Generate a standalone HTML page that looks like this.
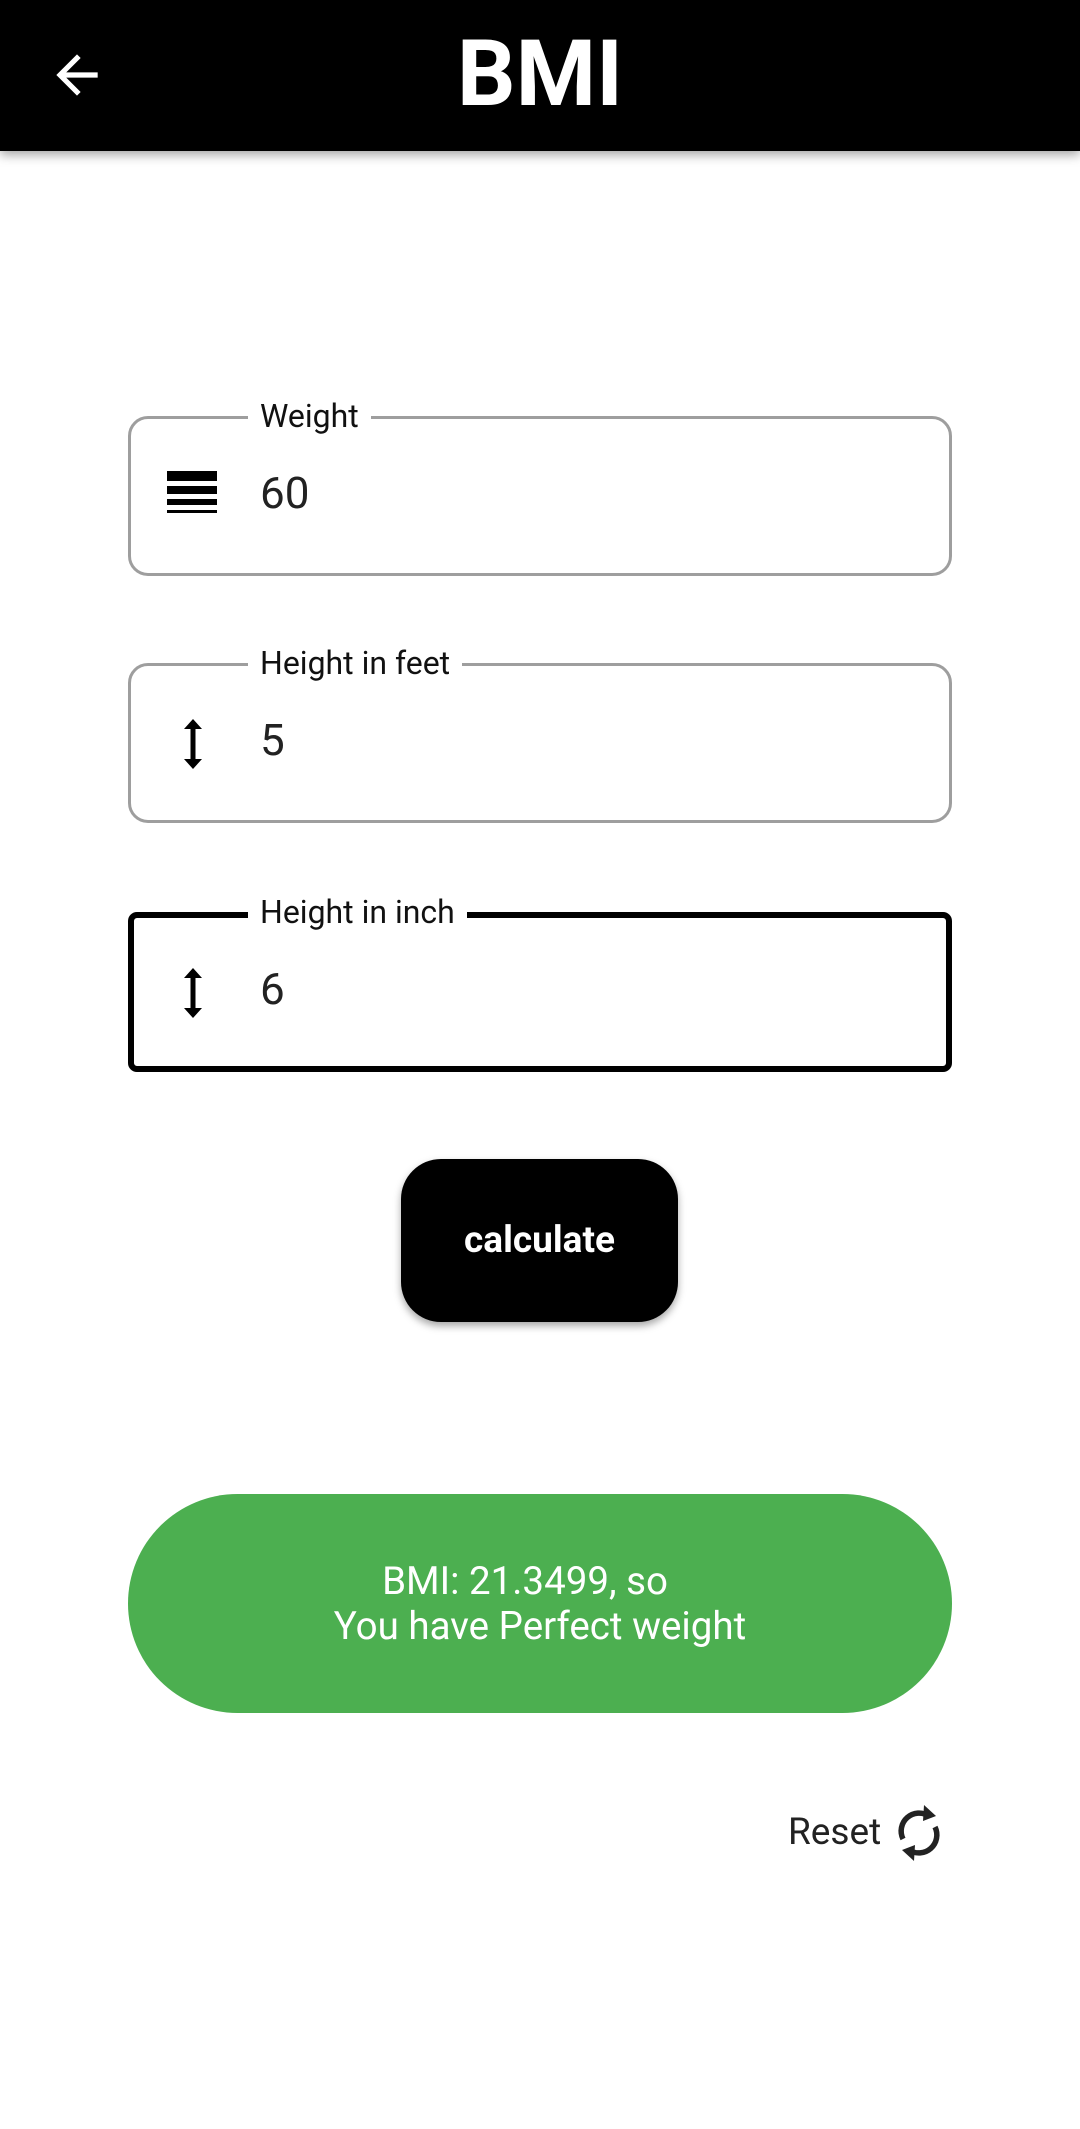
<!DOCTYPE html>
<html><head><meta charset="utf-8"><style>
*{margin:0;padding:0;box-sizing:border-box}
body{width:1080px;height:2129px;background:#fff;font-family:"Roboto","Liberation Sans",sans-serif;position:relative;overflow:hidden}
.hdr{position:absolute;left:0;top:0;width:1080px;height:151px;background:#000;box-shadow:0 4px 10px rgba(0,0,0,.35)}
.title{position:absolute;left:0;width:1080px;top:20px;text-align:center;color:#fff;font-weight:bold;font-size:92px;line-height:110px}
.field{position:absolute;left:128px;width:824px;height:160px;border:3px solid #9e9e9e;border-radius:20px}
.field.focus{border:6px solid #000;border-radius:9px}
.lbl{position:absolute;top:-23px;left:117px;background:#fff;padding:0 12px;font-size:32px;line-height:40px;color:#111}
.focus .lbl{top:-26px;left:114px}
.val{position:absolute;left:129px;top:46px;font-size:44px;line-height:56px;color:#222}
.focus .val{left:126px;top:43px}
.ico{position:absolute;left:36px;top:52px}
.focus .ico{left:33px;top:49px}
.btn{position:absolute;left:401px;top:1159px;width:277px;height:163px;background:#000;border-radius:40px;color:#fff;font-weight:bold;font-size:37px;text-align:center;line-height:163px;box-shadow:0 4px 8px rgba(0,0,0,.35)}
.pill{position:absolute;left:128px;top:1494px;width:824px;height:219px;background:#4caf50;border-radius:110px;color:#fff;text-align:center;font-size:38.5px;line-height:45px;padding-top:65px}
.reset{position:absolute;left:788px;top:1810px;font-size:37px;line-height:46px;color:#222}
</style></head><body>
<div class="hdr">
<svg style="position:absolute;left:46px;top:44px" width="62" height="62" viewBox="0 0 24 24"><path d="M20 11H7.83l5.59-5.59L12 4l-8 8 8 8 1.41-1.41L7.83 13H20v-2z" fill="#fff"/></svg>
<div class="title">BMI</div>
</div>
<div class="field" style="top:416px"><div class="lbl">Weight</div>
<svg class="ico" width="52" height="48" viewBox="0 0 52 48"><rect x="0" y="0" width="50" height="10" fill="#000"/><rect x="0" y="15" width="50" height="8" fill="#000"/><rect x="0" y="28" width="50" height="6" fill="#000"/><rect x="0" y="39" width="50" height="3" fill="#000"/></svg>
<div class="val">60</div></div>
<div class="field" style="top:663px"><div class="lbl">Height in feet</div>
<svg class="ico" width="52" height="52" viewBox="0 0 52 52"><path d="M26 1l-9 10h6.5v30H17l9 10 9-10h-6.5V11H35z" fill="#000"/></svg>
<div class="val">5</div></div>
<div class="field focus" style="top:912px"><div class="lbl">Height in inch</div>
<svg class="ico" width="52" height="52" viewBox="0 0 52 52"><path d="M26 1l-9 10h6.5v30H17l9 10 9-10h-6.5V11H35z" fill="#000"/></svg>
<div class="val">6</div></div>
<div class="btn">calculate</div>
<div class="pill"><span style="padding-right:30px">BMI: 21.3499, so</span><br>You have Perfect weight</div>
<div class="reset">Reset</div>
<svg style="position:absolute;left:893px;top:1803px" width="52" height="60" viewBox="0 0 52 60"><path d="M36 13A18 18 0 0 0 10 36" fill="none" stroke="#222" stroke-width="5.5"/><path d="M31 2l12 11-13 5z" fill="#222"/><path d="M16 47A18 18 0 0 0 42 24" fill="none" stroke="#222" stroke-width="5.5"/><path d="M21 58L9 47l13-5z" fill="#222"/></svg>
</body></html>
